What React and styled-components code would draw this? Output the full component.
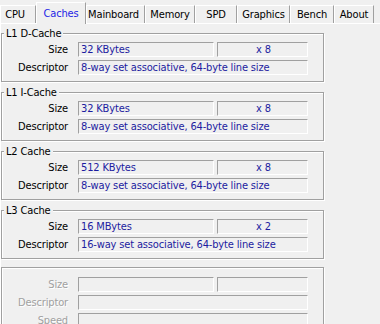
import React from 'react';
import styled, { createGlobalStyle } from 'styled-components';

const GlobalStyle = createGlobalStyle`
  html, body {
    margin: 0;
    padding: 0;
    background: #f0f0f0;
    overflow: hidden;
  }
  body {
    font-family: "DejaVu Sans Condensed", "Liberation Sans", Arial, sans-serif;
    font-size: 11px;
    letter-spacing: -0.15px;
  }
`;

const Window = styled.div`
  width: 380px;
  height: 324px;
  background: #f0f0f0;
  overflow: hidden;
`;

const TabStrip = styled.div`
  display: flex;
  align-items: flex-end;
  height: 23px;
  position: relative;
  z-index: 1;
`;

const Tab = styled.div`
  box-sizing: border-box;
  width: ${(p) => p.$w}px;
  height: ${(p) => (p.$active ? 22 : 18)}px;
  margin-bottom: ${(p) => (p.$active ? -1 : 0)}px;
  padding-right: ${(p) => p.$shift || 0}px;
  display: flex;
  align-items: center;
  justify-content: center;
  border-top: 1px solid #fff;
  border-left: 1px solid #fff;
  border-right: 1px solid #a0a0a0;
  background: #f0f0f0;
  color: ${(p) => (p.$active ? '#2525e6' : '#000')};
  white-space: nowrap;
`;

const Panel = styled.div`
  border-top: 1px solid #fff;
  border-left: 1px solid #fff;
  height: 300px;
  display: flex;
  flex-direction: column;
`;

const Group = styled.div`
  position: relative;
  box-sizing: border-box;
  width: 323px;
  margin: ${(p) => p.$top}px 0 0 0;
  border: 1px solid #a0a0a0;
  box-shadow: 1px 1px 0 #fff, inset 1px 1px 0 #fff;
  padding: ${(p) => (p.$plain ? 9 : 8)}px 0 6px 0;
  display: flex;
  flex-direction: column;
  gap: 3px;
`;

const Legend = styled.span`
  position: absolute;
  top: -7px;
  left: 2px;
  padding: 0 2px;
  line-height: 13px;
  background: #f0f0f0;
  color: #000;
`;

const Row = styled.div`
  display: flex;
  align-items: center;
  height: 15px;
`;

const Label = styled.div`
  width: 66px;
  margin-right: 10px;
  text-align: right;
  line-height: 15px;
  color: ${(p) => (p.$disabled ? '#a0a0a0' : '#000')};
  text-shadow: ${(p) => (p.$disabled ? '1px 1px 0 #fff' : 'none')};
`;

const Fields = styled.div`
  display: flex;
  gap: 3px;
`;

const Field = styled.div`
  box-sizing: border-box;
  width: ${(p) => p.$w}px;
  height: 15px;
  border-top: 1px solid #a0a0a0;
  border-left: 1px solid #a0a0a0;
  border-bottom: 1px solid #fff;
  border-right: 1px solid #fff;
  padding-left: 2px;
  line-height: 13px;
  color: #1c1ca0;
  text-align: ${(p) => (p.$center ? 'center' : 'left')};
  white-space: nowrap;
  overflow: hidden;
`;

const tabs = [
  { name: 'CPU', w: 36, shift: 6 },
  { name: 'Caches', w: 50, active: true },
  { name: 'Mainboard', w: 59, shift: 4 },
  { name: 'Memory', w: 50 },
  { name: 'SPD', w: 42 },
  { name: 'Graphics', w: 53 },
  { name: 'Bench', w: 44 },
  { name: 'About', w: 40 },
];

const caches = [
  { title: 'L1 D-Cache', size: '32 KBytes', ways: 'x 8', desc: '8-way set associative, 64-byte line size' },
  { title: 'L1 I-Cache', size: '32 KBytes', ways: 'x 8', desc: '8-way set associative, 64-byte line size' },
  { title: 'L2 Cache', size: '512 KBytes', ways: 'x 8', desc: '8-way set associative, 64-byte line size' },
  { title: 'L3 Cache', size: '16 MBytes', ways: 'x 2', desc: '16-way set associative, 64-byte line size' },
];

const CacheGroup = ({ cache, top }) => (
  <Group $top={top}>
    <Legend>{cache.title}</Legend>
    <Row>
      <Label>Size</Label>
      <Fields>
        <Field $w={136}>{cache.size}</Field>
        <Field $w={91} $center>{cache.ways}</Field>
      </Fields>
    </Row>
    <Row>
      <Label>Descriptor</Label>
      <Field $w={230}>{cache.desc}</Field>
    </Row>
  </Group>
);

export default function App() {
  return (
    <Window>
      <GlobalStyle />
      <TabStrip>
        {tabs.map((t) => (
          <Tab key={t.name} $w={t.w} $active={t.active} $shift={t.shift}>
            {t.name}
          </Tab>
        ))}
      </TabStrip>
      <Panel>
        {caches.map((c, i) => (
          <CacheGroup key={c.title} cache={c} top={i === 0 ? 9 : 10} />
        ))}
        <Group $top={8} $plain>
          <Row>
            <Label $disabled>Size</Label>
            <Fields>
              <Field $w={136} />
              <Field $w={91} />
            </Fields>
          </Row>
          <Row>
            <Label $disabled>Descriptor</Label>
            <Field $w={230} />
          </Row>
          <Row>
            <Label $disabled>Speed</Label>
            <Field $w={230} />
          </Row>
        </Group>
      </Panel>
    </Window>
  );
}
